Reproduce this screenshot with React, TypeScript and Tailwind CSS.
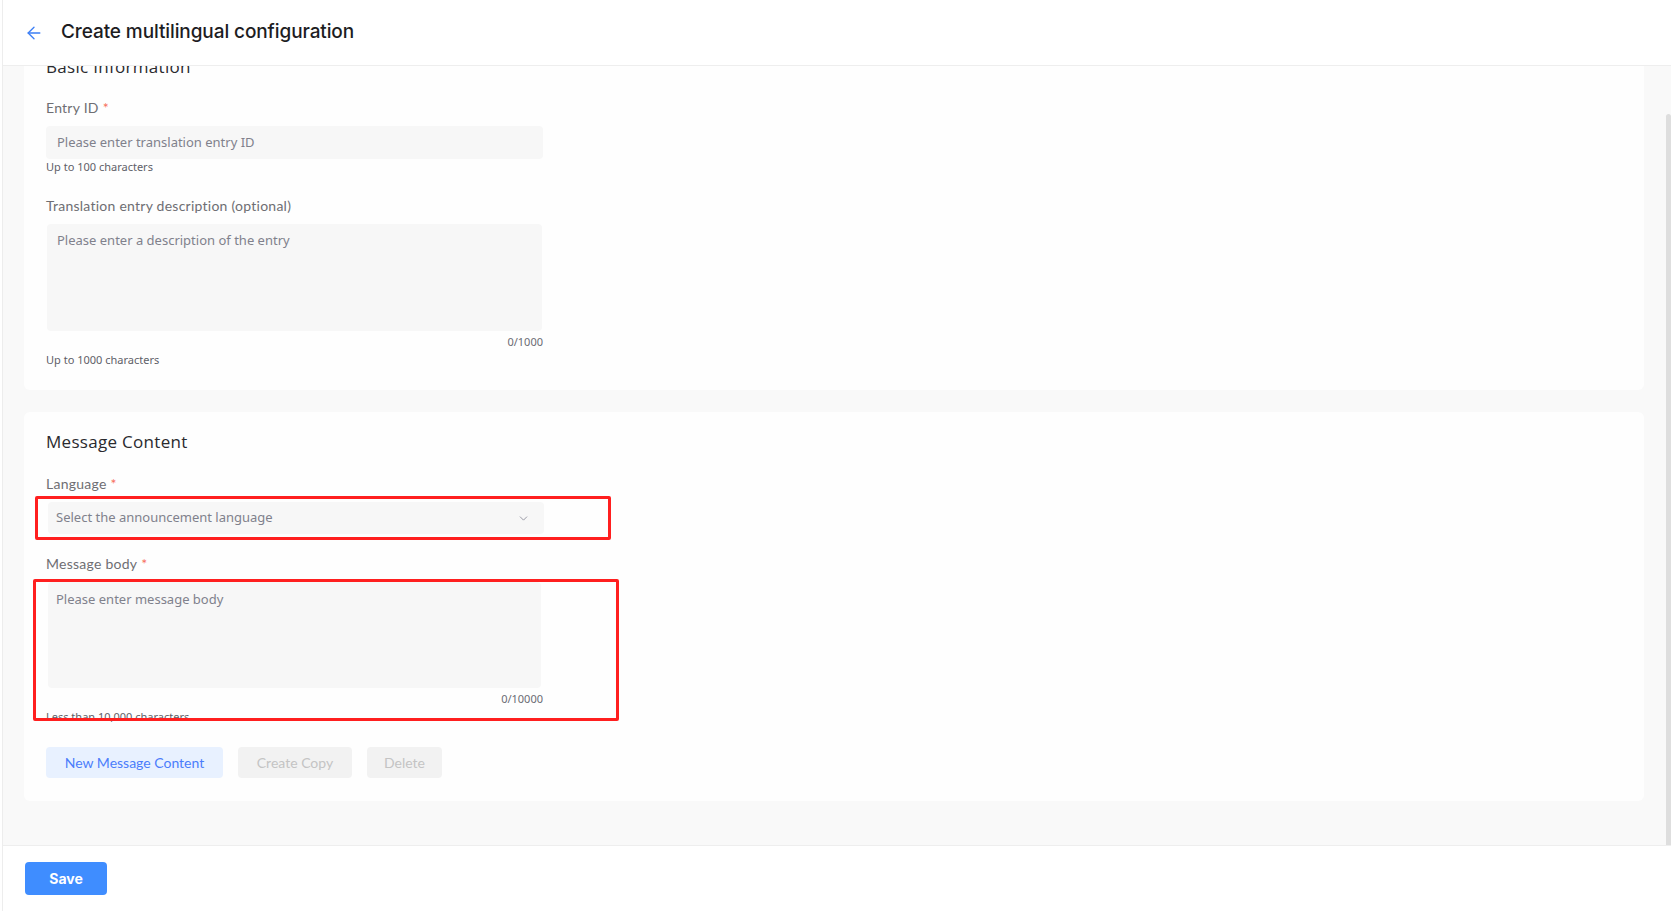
import React from 'react';
import { ArrowLeft, ChevronDown } from 'lucide-react';

const Label = ({ text, required }: { text: string; required?: boolean }) => (
  <div className="h-[20px] leading-[20px] text-[14px] tracking-[0.25px] text-[#6e6e73] font-['Lato',sans-serif]">
    {text}
    {required && <span className="ml-[4px] text-[#f76e5c]">*</span>}
  </div>
);

const Helper = ({ text }: { text: string }) => (
  <div className="h-[16px] leading-[16px] text-[11px] text-[#5f6068]">{text}</div>
);

const Counter = ({ text }: { text: string }) => (
  <div className="w-[497px] mt-[3px] h-[16px] leading-[16px] text-right text-[11px] text-[#6a6b73]">{text}</div>
);

const App: React.FC = () => {
  return (
    <div className="w-full h-[911px] pl-[2px] bg-white font-['Noto_Sans',sans-serif] overflow-hidden">
      <div className="h-full border-l border-[#ededed] flex flex-col">
        {/* Header */}
        <div className="h-[66px] shrink-0 border-b border-[#eeeeee] bg-white flex items-center pl-[21px] gap-[17px]">
          <ArrowLeft className="w-[20px] h-[20px] text-[#3d7ff5]" strokeWidth={1.6} />
          <h1 className="text-[19px] font-medium text-[#1d1d1f] tracking-[-0.1px] font-['Inter',sans-serif]">
            Create multilingual configuration
          </h1>
        </div>

        {/* Scrolled content */}
        <div className="flex-1 flex bg-[#f9f9f9] overflow-hidden">
          <div className="flex-1 overflow-hidden pl-[21px] pr-[21px]">
            <div className="-mt-[29px] flex flex-col gap-[22px]">
              {/* Basic information */}
              <div className="bg-[#fefefe] rounded-[6px] h-[353px] px-[22px] pt-[19px]">
                <div className="h-[22px] leading-[22px] text-[17px] tracking-[0.3px] text-[#2a2a2e] font-['Open_Sans',sans-serif]">Basic Information</div>
                <div className="mt-[20px]">
                  <Label text="Entry ID" required />
                </div>
                <div className="mt-[8px] w-[497px] h-[33px] rounded-[4px] bg-[#f7f7f7] flex items-center px-[11px] text-[13px] text-[#80818c]">
                  Please enter translation entry ID
                </div>
                <Helper text="Up to 100 characters" />
                <div className="mt-[21px]">
                  <Label text="Translation entry description (optional)" />
                </div>
                <div className="mt-[8px] ml-[1px] w-[495px] h-[107px] rounded-[4px] bg-[#f7f7f7] px-[10px] pt-[7px] text-[13px] text-[#80818c]">
                  Please enter a description of the entry
                </div>
                <Counter text="0/1000" />
                <div className="mt-[2px]">
                  <Helper text="Up to 1000 characters" />
                </div>
              </div>

              {/* Message content */}
              <div className="relative bg-[#fefefe] rounded-[6px] h-[389px] px-[22px] pt-[19px]">
                <div className="h-[22px] leading-[22px] text-[17px] tracking-[0.3px] text-[#2a2a2e] font-['Open_Sans',sans-serif]">Message Content</div>
                <div className="mt-[21px]">
                  <Label text="Language" required />
                </div>
                <div className="mt-[8px] ml-[2px] w-[496px] h-[32px] rounded-[4px] bg-[#f7f7f7] flex items-center justify-between pl-[8px] pr-[14px] text-[13px] text-[#80818c]">
                  <span>Select the announcement language</span>
                  <ChevronDown className="w-[13px] h-[13px] text-[#8a8b99]" strokeWidth={1.6} />
                </div>
                <div className="mt-[20px]">
                  <Label text="Message body" required />
                </div>
                <div className="mt-[8px] ml-[2px] w-[493px] h-[106px] rounded-[4px] bg-[#f7f7f7] px-[8px] pt-[8px] text-[13px] text-[#80818c]">
                  Please enter message body
                </div>
                <Counter text="0/10000" />
                <div className="mt-[2px]">
                  <Helper text="Less than 10,000 characters" />
                </div>
                <div className="mt-[22px] flex gap-[15px] font-['Lato',sans-serif] text-[14px]">
                  <button className="w-[177px] h-[31px] rounded-[4px] bg-[#e8f1ff] text-[#4b7dfb]">New Message Content</button>
                  <button className="w-[114px] h-[31px] rounded-[4px] bg-[#f2f2f2] text-[#c4c4c4]">Create Copy</button>
                  <button className="w-[75px] h-[31px] rounded-[4px] bg-[#f2f2f2] text-[#c4c4c4]">Delete</button>
                </div>

                {/* Annotation boxes */}
                <div className="absolute left-[11px] top-[84px] w-[576px] h-[44px] border-[3px] border-[#ff1f1f] rounded-[2px] pointer-events-none" />
                <div className="absolute left-[9px] top-[167px] w-[586px] h-[142px] border-[3px] border-[#ff1f1f] rounded-[2px] pointer-events-none" />
              </div>
            </div>
          </div>
          {/* Scrollbar */}
          <div className="w-[6px] shrink-0 pl-[1px]">
            <div className="mt-[48px] h-[731px] rounded-t-[3px] bg-[#dedede]" />
          </div>
        </div>

        {/* Footer */}
        <div className="h-[66px] shrink-0 border-t border-[#eeeeee] bg-white flex items-center pl-[22px]">
          <button className="w-[82px] h-[33px] rounded-[4px] bg-[#3f8dff] text-white text-[14px] font-bold font-['Inter',sans-serif]">
            Save
          </button>
        </div>
      </div>
    </div>
  );
};

export default App;
